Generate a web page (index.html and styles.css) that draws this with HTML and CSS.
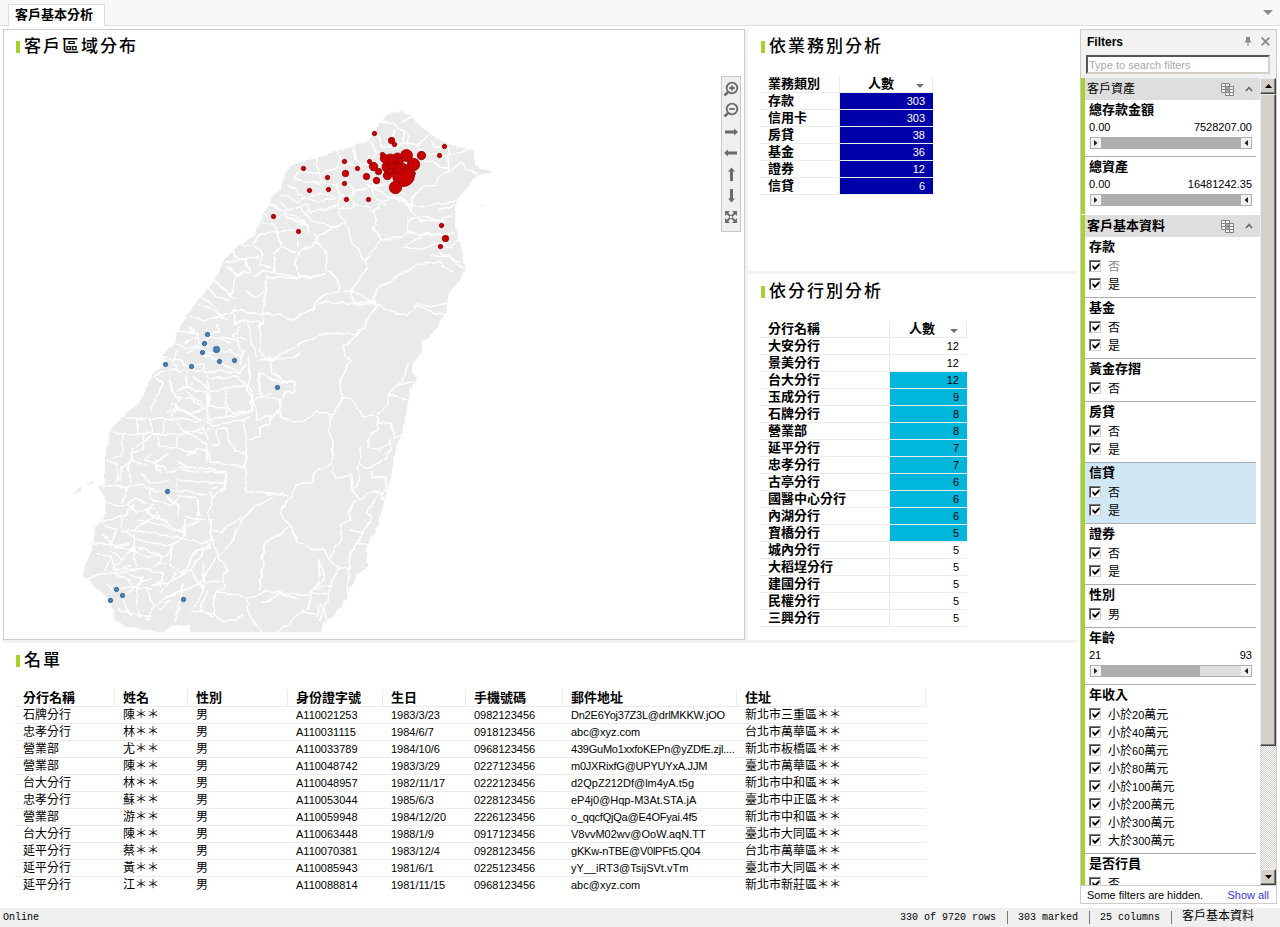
FILE: index.html
```html
<!DOCTYPE html>
<html lang="zh-Hant">
<head>
<meta charset="utf-8">
<title>客戶基本分析</title>
<link rel="stylesheet" href="styles.css">
</head>
<body>
<svg class="defs" width="0" height="0">
  <defs>
    <symbol id="i-table" viewBox="0 0 14 14"><g fill="#f4f4f4" stroke="#848484"><path d="M.5.5h8v9h-8zM.5 3.500h8M.5 6.500h8M4.500.5v9"/><path d="M4.500 3.500h8v9h-8z"/><path fill="#a8a8a8" d="M4.500 3.500h4v6h-4z"/><path d="M4.500 6.500h8M4.500 9.500h8M8.500 3.500v9" fill="none"/></g></symbol>
    <symbol id="i-chev" viewBox="0 0 8 6"><path d="M1 5l3-3.500L7 5" fill="none" stroke="#6a6a6a" stroke-width="1.700"/></symbol>
    <symbol id="i-down" viewBox="0 0 8 4"><path d="M0 0h8L4 4z" fill="#707070"/></symbol>
    <symbol id="i-check" viewBox="0 0 8 8"><path d="M.5 2.800L3 5.300 7.500.8v2.700L3 8 .5 5.500z" fill="#000"/></symbol>
    <symbol id="i-play" viewBox="0 0 4 6"><path d="M0 0l3.500 3L0 6z" fill="#222"/></symbol>
  </defs>
</svg>
<div class="app">
  <header class="tabs">
    <div class="tab">客戶基本分析</div>
    <svg class="tabs-menu" width="10" height="5" viewBox="0 0 10 5"><path d="M0 0h10L5 5z" fill="#8a8a8a"/></svg>
  </header>

  <main class="content">
    <div class="board">
      <section class="panel map">
        <h2>客戶區域分布</h2>
        <svg class="taiwan" viewBox="4 64 740 575">
          <defs>
            <filter id="rough" filterUnits="userSpaceOnUse" x="60" y="100" width="450" height="540" color-interpolation-filters="sRGB">
              <feTurbulence type="fractalNoise" baseFrequency=".13" numOctaves="1" seed="4"/>
              <feDisplacementMap in="SourceGraphic" scale="6" xChannelSelector="R" yChannelSelector="G"/>
            </filter>
            <clipPath id="frame"><path d="M60 100h450v532H60z"/></clipPath>
          </defs>
          <g clip-path="url(#frame)">
          <g filter="url(#rough)">
            <path fill="#eaeaea" d="M393 113L403 112 413 117 418 125 430 133 440 140 457 147 475 150 474 162 480 169 493 171 477 176 467 188 457 200 455 218 457 233 463 253 465 270 458 283 449 292 447 304 444 316 435 330 422 342 422 353 413 363 413 372 417 380 410 387 408 403 403 433 397 443 393 467 388 487 383 507 380 523 370 538 366 550 367 567 357 575 348 597 332 618 323 623 321 638H192L188 625 170 627 163 633 135 628 115 622 112 603 103 593 82 576 92 550 95 530 105 512 106 500 99 486 105 482V457L112 427 122 417 140 403 153 373 167 363 160 357 175 343 177 330 185 318 200 297 212 285 223 262 238 245 253 237 262 218 267 207 280 187 290 167 300 162 320 157 337 150 357 145 370 140 377 128 387 115z"/>
            <path d="M75 493l8-5M86 486l8-5" stroke="#eaeaea" stroke-width="2"/>
            <path d="M481 206h3" stroke="#eaeaea"/>
            <g fill="none" stroke="#fff" stroke-width="4.600" stroke-linejoin="round">
              <g transform="translate(200 90) scale(.33333)">
                <path d="M540 100l15-5 20 5 20 10 12 15 3 30M610 95l25-18M605 120l25 20-10 15 15 30M560 160l25-40M530 130l15 40 35 5 40-20 35 10 35-35"/>
                <path d="M620 155l30 10 15 20 35 10 40 5 5 45-25 10-15 30-45 10-20 25-5 40-20-25-60-20-30-20-20-30 5-40M690 150l15 20 40 5 5 20M740 200l50-15 20-10M750 245l30-30 15 5 5 20 30 15M670 210l30 5 15 15 30 5"/>
                <path d="M350 200l5 50-60-5-15 20M410 180l10 25-10 30M460 168l5 40 20 15M510 155l20 35-15 20M360 250l50-15 35-15 25 10 30-5 10-30M355 250l10 30 40 5 30-10 30 20-20 30-5 30M280 265l40 10 40 5M260 285l30 10 5 20 60 20 50-10M240 310l50 25 70-25 50 10 20-5M235 330l30 30 60-15 5 20 30-5 50-15M410 285l10 45-5 30M450 320l30-20 40-10 40-10 30 20 20 15M450 320l15 30M415 360l40-10 20-5 30 5 15 20M500 280l20 20 10 30 30 15M200 340l50 20 40 25 40 25M190 360l10 25M230 385l20-15 30 25M185 400l30 5 20 20 40-5 20 5M260 385l60 20 10 25M320 365l10 25 40 10 40 20M300 350l20 30"/>
                <path d="M520 370l20-30 40-20 35 10 10 15 50 5 35-10 50-5 30-15M620 330l10 30 35 35 60-5 30-15M715 360l50-15M520 370l10 20-10 20 20 40 70-10 15-20M625 380v45l40 5 60 5 35-10M630 390l40-10 60 15M610 470l60-35 90-5M610 470l50 10 50-20 40 10 30-20"/>
                <path d="M410 365l25 30 10 20 5 35 25 30 15 28 15-5 25-35 10-20M435 400l-40 15-35 20-10 25 25 20 5 40-3 20 30 20 10 25-5 20-35 10-30 20-15 30M490 505l10 30-45 65 5 35 65 5M415 607l40-5 65 35 10-40 80-50 40-20 65-15 20 20 20 10M650 640l40 10 50-10M690 495l60 10 30 10M710 480l40 25 40 30"/>
                <path d="M300 480l45-20 20 5M300 480l-15 50 15 30 75-5M345 430l10 30M290 430l5 40M220 490l25-20 40 20M225 500v50l70 10M160 460l20-30 50-5 15 40M120 465l50 5 20 25-15 30 40 10M100 485l20 25 60-15M75 520l60-15 15 40-50 5-20-20M200 560l95 5 80-10M200 560l-5 90M135 545l-30 20-15 60M135 600l30 20 30-15M160 560l30-20 30 5M40 570l25 20 40 40M20 590l30 30 40 10M0 620l30 20M110 560l-20-30"/>
              </g>
              <g transform="translate(60 300) scale(.33333)">
                <path d="M410 10l30 10 45 30 35-20 45 5 45 15M440 0l30 30M390 50l50 10 30-10 35 10M520 40l5 30 35-10 45 10M470 70l10 20-40 20M540 80l-20 30 40 10M565 70l5 50 20 50M600 70v80l20 30 70-5 30-15M610 0v65l-10 20M440 85v60M350 90l60 10 10 30 35-20 60 20M345 130l30 15 35-5 40 20 60-10 30 20 15-20M480 110l50 10 15 40-5 35M385 80l30 30-40 20M380 160l40-20 20 30M300 170l60 10 20 20 50-5M350 150l-10 40 20 25M430 190l5 30 40-10 60 10 20-30M435 160l50 30 50 25"/>
                <path d="M280 225l60-15 100 5 5 20 90-5 30 35M330 220v50l30 30-30 60M280 230l30 20-40 80M380 215v50l-35 5M380 260l60 20M345 290l50 5 40 30M400 230l40 30v60l-40 20M330 310l60 30 50-20M360 270l40-20M345 320l80 40M380 280l50 30M320 340l40-20M440 240l10 35 50-10 60-10M445 280v40l60 5M500 270l-5 40 20 30 60-5v-60l-15-20-60 10M505 320l-5 30 65-10M440 320l5 40 60-10M565 170l5 60-10 40 25 40-20 30M580 310l10-20 40-10M590 310v50l45-15 30-20-5-30M600 220l20 10 60 20M600 220v70l50 5 10 10"/>
                <path d="M185 350l50 10 100-5 100 10 25 10 60-10 45-15M230 360l5 50M270 360l10 45 30-5 5-45M160 400l50 5 50-5 80 5 40-10 40 5 30-15M190 405l-5 60-30 10M210 460l40-10v-50M215 450l30-20 30-20M275 460l-20 20 30 10 40-30M290 410l10 30 50 5v-35M350 445l70 20M350 370l30 30 60 30v60M400 400l30-20 15 40M380 470l30-20 30-5 10 40 60 10 50 5M500 380l-30 10 5 40-20 10M500 380l5 40 25 30 25 10 5 40M550 360l10 60-5 20M570 420l30-10v-30l30-5v-30l35-10M560 440l-5 60 5 75 70 8 40-5"/>
                <path d="M140 480l30 10 5 50-10 10M180 540l5-35 30-25 45 20M215 460l-10 40 10 50M245 520l30 30 50-10M275 490l30 10 20 20 50-20-20-20M310 470l-30 20 30 30M370 510l130 10-5 50-45-10M370 500l60 5 65 10M360 540l80 5 60 5M355 570l90 15M350 560l5-25M120 555l60 5 65-5 40 20 70-5M200 560l-15 50M270 560l5 40 60 15 20-20M135 610l60 5 30-20 40 15M320 590l35 30v35M350 590l60 5 10 55M280 610l-20 30 40 15M200 610l25 25 60-10M450 570l10 20-15 50 10 50M500 520l-10 50-30 20"/>
                <path d="M140 635l-20 30 80-20 20-30M120 670l50 20-20 50M180 650l10 50 50-20 40-30M225 660l60 10 80 25M290 640l30 30 50 25M220 690l60 10 90 15 5-35 60-25M200 700l50 25 80 10 40-20M375 660l-5 60 70 10 10-10 5-60M370 650l50 10M450 690l35 5 60-45M415 600v50M130 700l30 40 50-10M100 730l50 5 60 15 50 20 60-5 20-30M105 760l50 10 10 30M150 750l40 30 30-40M190 770l-30 40 50-10M225 700l-5 70 10 30M230 740l80 30-20 30M335 740l-5 60 40 20 30-60 50-20M80 845l30-25 80-5 60 25 30-5M190 810l60-5 60 15-10 40M250 830l-20 30M280 800l40-10M150 780l-15 30"/>
                <path d="M450 730l-60 80-55 35-60 10M470 770l-50 80-90 40M450 695l10 40 15 35 35-40 30-60 40-50 60-28M475 770l30 40-15 20 5 30-25 15M350 820l-50 60M370 850l-10 60-20 60M430 790v80l-25 50M160 820l50 20 5 30-30 20 30 60M140 850l20 20 60-10 60 5M230 865v60l15 30M260 870l20 50-20 40M280 920l60-40 30-10M330 900l-30 30M170 930l40 10 60 10M465 880l10-5 60 10 30 10M465 880l-5 60 30 25 60-20M560 895l5 50 40 50M445 870l-25 60 40 20M390 930l70 10M430 850l50-10M390 810l40 60"/>
                <path d="M565 893l60-20 30 3 65 25M600 870l10-90 5-50 60-40"/>
              </g>
              <g transform="translate(260 300) scale(.33333)">
                <path d="M0 40l60 5 35 15 80-45 30-15M205 5l60 5 60 5 25-5M345 0l5 20-40 60-20 25-55-5-50 5-60 25-45 25-40 20-40 5M350 15l40 20 50 12 30-30 80 30M290 105l-40 35v20l25 20-25 40-10 35 5 40-30 60M245 290l30 10 30 45 45 5 5 15M350 345l35-30v-35l40-35 20-55M400 265l35-15 25-5M385 280l55 20M350 365l45 5 5 40 25-5M350 370l5 20-25 10-5 40 35 10 35-25M305 445l-10 50 35 10 50-35 10-20v-35"/>
                <path d="M215 350l-10 40 15 35-5 65 15 45 45-10 5 50 20 25 40-30 20 10 15 25M215 490l-55 30v25l-50 10-15 30-15 20M290 500l10 25-15 40M335 510l5 20h35l5 35-15 20M350 570v20l-30 45 15 20-25 45-40-10M290 600l-25 40 5 20-30 15 5 40-40 65M310 700l-40 60v50M290 730l35 5M80 600l-20 45 35 35-40 20-40 30-10 50M95 685l20 40 40 20 40 5 10 30 35 25 30-5M180 785l15 50-30 30 45-5 25-55M180 780l-5 70-25 30-5 50M210 860l-5 20-55 2M210 880l-20 50 10 30M0 905l30-5 20-20 95 2M125 935l50 10-5-25 15-10v40l-10 15M125 935l-20 20-55 40M265 805v80M60 350l45 15 35-5 30-25 45 10M30 170l5 50M40 220l30 20 40 10-10 30-25-5-10 25v50M0 575l40 5 40 10"/>
              </g>
            </g>
          </g>
          </g>
          <g fill="#c80000" stroke="#900000" stroke-width=".8">
            <g>
              <circle cx="374.500" cy="133.500" r="2.200"/><circle cx="444.500" cy="146.500" r="2.200"/><circle cx="439.500" cy="155.500" r="2.200"/><circle cx="394.500" cy="144.500" r="2.200"/><circle cx="391.500" cy="140.500" r="3.200"/>
              <circle cx="303.500" cy="168.500" r="2.200"/><circle cx="344.500" cy="161.500" r="2.200"/><circle cx="327.500" cy="177.500" r="2.200"/><circle cx="309.500" cy="190.500" r="2.200"/><circle cx="328.500" cy="189.500" r="2.200"/><circle cx="344.500" cy="183.500" r="2.200"/><circle cx="345.500" cy="173.500" r="3.200"/><circle cx="357.500" cy="168.500" r="2.200"/><circle cx="346.500" cy="199.500" r="2.200"/><circle cx="368.500" cy="199.500" r="2.200"/>
              <circle cx="273.500" cy="216.500" r="2.200"/><circle cx="298.500" cy="231.500" r="2.200"/><circle cx="441.500" cy="225.500" r="2.200"/><circle cx="445.500" cy="238.500" r="3.200"/><circle cx="440.500" cy="246.500" r="2.200"/>
              <circle cx="366.500" cy="176.500" r="3.200"/><circle cx="376.500" cy="180.500" r="3.200"/><circle cx="369.500" cy="161.500" r="2.200"/><circle cx="421.500" cy="155.500" r="4.200"/>
            </g>
            <circle cx="403.500" cy="175.500" r="11"/><circle cx="395.500" cy="187.500" r="6.200"/><circle cx="387.500" cy="175.500" r="4.200"/><circle cx="387.500" cy="167" r="5.500"/><circle cx="397.500" cy="158" r="5"/><circle cx="390.500" cy="160" r="6"/><circle cx="382.500" cy="154.500" r="2.200"/><circle cx="384.500" cy="158.500" r="4.200"/><circle cx="397.500" cy="167.500" r="5.500"/><circle cx="392.500" cy="166.500" r="4"/><circle cx="400.500" cy="160.500" r="3.200"/><circle cx="406.500" cy="155.500" r="6"/><circle cx="413.500" cy="164.500" r="6.200"/><circle cx="403.500" cy="166.500" r="3"/><circle cx="413.500" cy="173.500" r="2"/><circle cx="390.500" cy="171.500" r="3.200"/><circle cx="373.500" cy="166.500" r="4.200"/><circle cx="378.500" cy="171.500" r="3.200"/>
          </g>
          <g fill="#4380b8" stroke="#2c608f" stroke-width=".8">
            <circle cx="207.500" cy="334.500" r="2.200"/><circle cx="204.500" cy="343.500" r="2.200"/><circle cx="202.500" cy="352.500" r="2.200"/><circle cx="216.500" cy="349.500" r="3.200"/><circle cx="219.500" cy="361.500" r="2.200"/><circle cx="234.500" cy="360.500" r="2.200"/><circle cx="191.500" cy="366.500" r="2.200"/><circle cx="165.500" cy="364.500" r="2.200"/><circle cx="277.500" cy="387.500" r="2.200"/><circle cx="167.500" cy="491.500" r="2.200"/><circle cx="116.500" cy="589.500" r="2.200"/><circle cx="122.500" cy="595.500" r="2.200"/><circle cx="110.500" cy="600.500" r="2.200"/><circle cx="183.500" cy="599.500" r="2.200"/>
          </g>
        </svg>
        <div class="map-tools">
          <svg viewBox="0 0 16 16"><g fill="none" stroke="#6b6b6b" stroke-width="1.800"><circle cx="9" cy="7" r="5.300"/><path d="M5.200 10.800L1.500 14.500" stroke-width="2.600"/><path d="M6.200 7h5.600M9 4.200v5.600"/></g></svg>
          <svg viewBox="0 0 16 16"><g fill="none" stroke="#6b6b6b" stroke-width="1.800"><circle cx="9" cy="7" r="5.300"/><path d="M5.200 10.800L1.500 14.500" stroke-width="2.600"/><path d="M6.200 7h5.600"/></g></svg>
          <svg viewBox="0 0 16 16"><path fill="#6b6b6b" d="M2 6.500h9V4.500L15 8l-4 3.500v-2H2z"/></svg>
          <svg viewBox="0 0 16 16"><path fill="#6b6b6b" d="M14 6.500H5v-2L1 8l4 3.500v-2h9z"/></svg>
          <svg viewBox="0 0 16 16"><path fill="#6b6b6b" d="M7 15V5.500H5L8.500 1.500 12 5.500h-2V15z"/></svg>
          <svg viewBox="0 0 16 16"><path fill="#6b6b6b" d="M7 1v9.500H5l3.500 4 3.500-4h-2V1z"/></svg>
          <svg viewBox="0 0 16 16"><path fill="#6b6b6b" d="M2 2h5L2 7zM14 2v5L9 2zM2 14V9l5 5zM14 14H9l5-5z"/><path stroke="#6b6b6b" stroke-width="2" d="M3 3l10 10M13 3L3 13"/><path fill="#efefef" d="M7 7h2v2H7z"/></svg>
        </div>
      </section>

      <section class="panel biz">
        <h2>依業務別分析</h2>
        <table class="cross cross-a">
          <tr><th>業務類別</th><th class="cnt">人數<svg width="8" height="4"><use href="#i-down"/></svg></th></tr>
          <tr class="on"><th>存款</th><td>303</td></tr>
          <tr class="on"><th>信用卡</th><td>303</td></tr>
          <tr class="on"><th>房貸</th><td>38</td></tr>
          <tr class="on"><th>基金</th><td>36</td></tr>
          <tr class="on"><th>證券</th><td>12</td></tr>
          <tr class="on"><th>信貸</th><td>6</td></tr>
        </table>
      </section>

      <section class="panel branch">
        <h2>依分行別分析</h2>
        <table class="cross cross-b">
          <tr><th>分行名稱</th><th class="cnt">人數<svg width="8" height="4"><use href="#i-down"/></svg></th></tr>
          <tr><th>大安分行</th><td>12</td></tr>
          <tr><th>景美分行</th><td>12</td></tr>
          <tr class="on"><th>台大分行</th><td>12</td></tr>
          <tr class="on"><th>玉成分行</th><td>9</td></tr>
          <tr class="on"><th>石牌分行</th><td>8</td></tr>
          <tr class="on"><th>營業部</th><td>8</td></tr>
          <tr class="on"><th>延平分行</th><td>7</td></tr>
          <tr class="on"><th>忠孝分行</th><td>7</td></tr>
          <tr class="on"><th>古亭分行</th><td>6</td></tr>
          <tr class="on"><th>國醫中心分行</th><td>6</td></tr>
          <tr class="on"><th>內湖分行</th><td>6</td></tr>
          <tr class="on"><th>寶橋分行</th><td>5</td></tr>
          <tr><th>城內分行</th><td>5</td></tr>
          <tr><th>大稻埕分行</th><td>5</td></tr>
          <tr><th>建國分行</th><td>5</td></tr>
          <tr><th>民權分行</th><td>5</td></tr>
          <tr><th>三興分行</th><td>5</td></tr>
        </table>
      </section>

      <section class="panel list">
        <h2>名單</h2>
        <table class="people">
          <colgroup><col class="w1"><col class="w2"><col class="w3"><col class="w4"><col class="w5"><col class="w6"><col class="w7"><col class="w8"></colgroup>
          <tr><th>分行名稱</th><th>姓名</th><th>性別</th><th>身份證字號</th><th>生日</th><th>手機號碼</th><th>郵件地址</th><th>住址</th></tr>
          <tr><td>石牌分行</td><td>陳＊＊</td><td>男</td><td class="n">A110021253</td><td class="n">1983/3/23</td><td class="n">0982123456</td><td class="n tight">Dn2E6Yoj37Z3L@drlMKKW.jOO</td><td>新北市三重區＊＊</td></tr>
          <tr><td>忠孝分行</td><td>林＊＊</td><td>男</td><td class="n">A110031115</td><td class="n">1984/6/7</td><td class="n">0918123456</td><td class="n">abc@xyz.com</td><td>台北市萬華區＊＊</td></tr>
          <tr><td>營業部</td><td>尤＊＊</td><td>男</td><td class="n">A110033789</td><td class="n">1984/10/6</td><td class="n">0968123456</td><td class="n tight">439GuMo1xxfoKEPn@yZDfE.zjl....</td><td>新北市板橋區＊＊</td></tr>
          <tr><td>營業部</td><td>陳＊＊</td><td>男</td><td class="n">A110048742</td><td class="n">1983/3/29</td><td class="n">0227123456</td><td class="n tight">m0JXRixfG@UPYUYxA.JJM</td><td>臺北市萬華區＊＊</td></tr>
          <tr><td>台大分行</td><td>林＊＊</td><td>男</td><td class="n">A110048957</td><td class="n">1982/11/17</td><td class="n">0222123456</td><td class="n">d2QpZ212Df@lm4yA.t5g</td><td>新北市中和區＊＊</td></tr>
          <tr><td>忠孝分行</td><td>蘇＊＊</td><td>男</td><td class="n">A110053044</td><td class="n">1985/6/3</td><td class="n">0228123456</td><td class="n">eP4j0@Hqp-M3At.STA.jA</td><td>臺北市中正區＊＊</td></tr>
          <tr><td>營業部</td><td>游＊＊</td><td>男</td><td class="n">A110059948</td><td class="n">1984/12/20</td><td class="n">2226123456</td><td class="n tight">o_qqcfQjQa@E4OFyai.4f5</td><td>新北市中和區＊＊</td></tr>
          <tr><td>台大分行</td><td>陳＊＊</td><td>男</td><td class="n">A110063448</td><td class="n">1988/1/9</td><td class="n">0917123456</td><td class="n">V8vvM02wv@OoW.aqN.TT</td><td>臺北市大同區＊＊</td></tr>
          <tr><td>延平分行</td><td>蔡＊＊</td><td>男</td><td class="n">A110070381</td><td class="n">1983/12/4</td><td class="n">0928123456</td><td class="n tight">gKKw-nTBE@V0lPFt5.Q04</td><td>台北市萬華區＊＊</td></tr>
          <tr><td>延平分行</td><td>黃＊＊</td><td>男</td><td class="n">A110085943</td><td class="n">1981/6/1</td><td class="n">0225123456</td><td class="n">yY__iRT3@TsijSVt.vTm</td><td>臺北市大同區＊＊</td></tr>
          <tr><td>延平分行</td><td>江＊＊</td><td>男</td><td class="n">A110088814</td><td class="n">1981/11/15</td><td class="n">0968123456</td><td class="n">abc@xyz.com</td><td>新北市新莊區＊＊</td></tr>
        </table>
      </section>
    </div>

    <aside class="filters">
      <div class="f-head"><b>Filters</b>
        <svg width="7" height="9" viewBox="0 0 7 9"><path d="M2 0h4v4h1v1.500H4.500V9h-1V5.500H1V4h1z" fill="#8a8a8a"/></svg>
        <svg width="9" height="9" viewBox="0 0 9 9"><path d="M.7.7l7.600 7.600M8.300.7L.7 8.300" stroke="#8a8a8a" stroke-width="1.800"/></svg>
      </div>
      <div class="search">Type to search filters</div>
      <div class="f-body">
        <div class="f-list">
          <div class="group">
            <div class="g-head light">客戶資產<svg width="14" height="14"><use href="#i-table"/></svg><svg width="8" height="6"><use href="#i-chev"/></svg></div>
            <div class="item range"><h3>總存款金額</h3><p><span>0.00</span><span>7528207.00</span></p>
              <div class="slider"><i><svg width="4" height="6"><use href="#i-play"/></svg></i><b></b><i class="r"><svg width="4" height="6"><use href="#i-play"/></svg></i></div></div>
            <div class="item range last"><h3>總資產</h3><p><span>0.00</span><span>16481242.35</span></p>
              <div class="slider"><i><svg width="4" height="6"><use href="#i-play"/></svg></i><b></b><i class="r"><svg width="4" height="6"><use href="#i-play"/></svg></i></div></div>
          </div>
          <div class="group">
            <div class="g-head">客戶基本資料<svg width="14" height="14"><use href="#i-table"/></svg><svg width="8" height="6"><use href="#i-chev"/></svg></div>
            <div class="item"><h3>存款</h3><label class="dim"><i><svg><use href="#i-check"/></svg></i>否</label><label><i><svg><use href="#i-check"/></svg></i>是</label></div>
            <div class="item"><h3>基金</h3><label><i><svg><use href="#i-check"/></svg></i>否</label><label><i><svg><use href="#i-check"/></svg></i>是</label></div>
            <div class="item"><h3>黃金存摺</h3><label><i><svg><use href="#i-check"/></svg></i>否</label></div>
            <div class="item"><h3>房貸</h3><label><i><svg><use href="#i-check"/></svg></i>否</label><label><i><svg><use href="#i-check"/></svg></i>是</label></div>
            <div class="item hot"><h3>信貸</h3><label><i><svg><use href="#i-check"/></svg></i>否</label><label><i><svg><use href="#i-check"/></svg></i>是</label></div>
            <div class="item"><h3>證券</h3><label><i><svg><use href="#i-check"/></svg></i>否</label><label><i><svg><use href="#i-check"/></svg></i>是</label></div>
            <div class="item"><h3>性別</h3><label><i><svg><use href="#i-check"/></svg></i>男</label></div>
            <div class="item range"><h3>年齡</h3><p><span>21</span><span>93</span></p>
              <div class="slider part"><i><svg width="4" height="6"><use href="#i-play"/></svg></i><b></b><i class="r"><svg width="4" height="6"><use href="#i-play"/></svg></i></div></div>
            <div class="item"><h3>年收入</h3>
              <label><i><svg><use href="#i-check"/></svg></i>小於<span>20</span>萬元</label>
              <label><i><svg><use href="#i-check"/></svg></i>小於<span>40</span>萬元</label>
              <label><i><svg><use href="#i-check"/></svg></i>小於<span>60</span>萬元</label>
              <label><i><svg><use href="#i-check"/></svg></i>小於<span>80</span>萬元</label>
              <label><i><svg><use href="#i-check"/></svg></i>小於<span>100</span>萬元</label>
              <label><i><svg><use href="#i-check"/></svg></i>小於<span>200</span>萬元</label>
              <label><i><svg><use href="#i-check"/></svg></i>小於<span>300</span>萬元</label>
              <label><i><svg><use href="#i-check"/></svg></i>大於<span>300</span>萬元</label></div>
            <div class="item"><h3>是否行員</h3><label><i><svg><use href="#i-check"/></svg></i>否</label></div>
          </div>
        </div>
        <div class="scroll">
          <div class="btn"><svg width="7" height="4" viewBox="0 0 7 4"><path d="M0 4h7L3.500 0z"/></svg></div>
          <div class="thumb"></div>
          <div class="track"></div>
          <div class="btn"><svg width="7" height="4" viewBox="0 0 7 4"><path d="M0 0h7L3.500 4z"/></svg></div>
        </div>
      </div>
      <div class="f-foot"><span>Some filters are hidden.</span><a>Show all</a></div>
    </aside>
  </main>

  <footer class="status"><span class="online">Online</span><span>330 of 9720 rows</span><span>303 marked</span><span>25 columns</span><span class="tbl">客戶基本資料</span></footer>
</div>
</body>
</html>
```
FILE: styles.css
```css
* { box-sizing: border-box; }
body { margin: 0; background: #fff; color: #000; font: 12px/16px "Liberation Sans", "Noto Sans CJK TC", sans-serif; }
h2, h3, p { margin: 0; }
.defs { display: block; height: 0; }
.app { width: 1280px; height: 927px; display: flex; flex-direction: column; overflow: hidden; }

.tabs { height: 26px; flex: none; background: #f7f7f7; border-bottom: 1px solid #ddd; display: flex; align-items: flex-start; justify-content: space-between; padding: 4px 7px 0 8px; }
.tab { width: 97px; height: 22px; background: #fff; border: 1px solid #ddd; border-bottom: 0; padding-left: 6px; font-size: 13px; font-weight: 700; line-height: 20px; }
.tabs-menu { margin-top: 6px; }

.content { flex: 1; min-height: 0; display: flex; padding: 3px 3px 0; }
.board { width: 1074px; margin-right: 3px; display: grid; grid-template-columns: 742px 332px; grid-template-rows: 242px 369px 1fr; }
.panel { position: relative; min-width: 0; }
.panel h2 { font-size: 17px; font-weight: 500; letter-spacing: 2px; line-height: 34px; height: 34px; display: flex; align-items: center; gap: 4px; padding-left: 12px; }
.panel h2::before { content: ""; width: 4px; height: 12px; background: #a4d32c; }
.map { grid-row: 1 / 3; border: 1px solid #ccc; }
.taiwan { display: block; width: 740px; height: 575px; }
.map-tools { position: absolute; left: 717px; top: 46px; width: 20px; height: 156px; background: #efefef; border: 1px solid #c8c8c8; padding: 2px 1px 4px; display: flex; flex-direction: column; justify-content: space-between; }
.map-tools svg { width: 16px; height: 20px; }
.biz, .branch { border-left: 3px solid #f2f2f2; }
.branch { border-top: 3px solid #f2f2f2; }
.list { grid-column: 1 / 3; border-top: 3px solid #f2f2f2; }
.biz h2, .branch h2, .list h2 { padding-top: 2px; padding-left: 13px; }

table { border-collapse: separate; border-spacing: 0; table-layout: fixed; }
th, td { height: 17px; padding: 0; line-height: 16px; border-bottom: 1px solid #ececec; text-align: left; white-space: nowrap; overflow: hidden; vertical-align: top; }
th { font-size: 13px; font-weight: 700; line-height: 15px; }

.cross { margin: 13px 0 0 12px; }
.cross th:first-child { padding-left: 8px; border-right: 1px solid #ececec; }
.cross-a { width: 173px; }
.cross-a th:first-child { width: 80px; }
.cross-b { width: 207px; }
.cross-b th:first-child { width: 130px; }
.cross .cnt { border-right: 1px solid #ececec; text-align: right; padding-right: 8px; }
.cnt svg { margin-left: 22px; vertical-align: 0; }
.cross-b .cnt svg { margin-left: 15px; }
.cross td { font-size: 11px; text-align: right; padding-right: 8px; }
.cross-a .on td { background: #0000a8; color: #fff; }
.cross-b .on td { background: #00b6da; }

.people { width: 911px; margin: 13px 0 0 12px; }
.people th { border-right: 1px solid #ececec; }
.people th, .people td { padding-left: 8px; }
.people .n { font-size: 11px; }
.people .tight { letter-spacing: -.22px; }
.people tr:last-child td { border-bottom: 0; }
.w1 { width: 100px; } .w2 { width: 73px; } .w3 { width: 100px; } .w4 { width: 95px; }
.w5 { width: 83px; } .w6 { width: 97px; } .w7 { width: 174px; } .w8 { width: 189px; }

.filters { width: 197px; height: 875px; border: 1px solid #ccc; background: #f2f2f2; display: flex; flex-direction: column; }
.f-head { height: 25px; flex: none; display: flex; align-items: center; padding: 0 6px 2px 6px; gap: 10px; }
.f-head b { flex: 1; font-size: 12px; }
.search { flex: none; height: 19px; margin: 0 6px 4px 5px; width: 184px; background: #fff; border: 2px solid; border-color: #555 #d4d0c8 #d4d0c8 #555; font-size: 11px; line-height: 16px; color: #aaa; padding-left: 1px; }
.f-body { flex: 1; min-height: 0; display: flex; background: #fff; }
.f-list { width: 179px; overflow: hidden; }
.group { border-left: 4px solid #a4d32c; }
.group + .group { margin-top: 1px; }
.g-head { height: 22px; background: #dedede; display: flex; align-items: center; gap: 10px; padding: 0 7px 1px 2px; font-size: 13px; font-weight: 700; }
.g-head svg:first-of-type { margin: 2px 0 0 auto; }
.g-head.light { font-size: 12px; font-weight: 400; }
.item { margin-right: 4px; padding: 0 4px 4px 4px; border-bottom: 1px solid #aeaeae; }
.item.last { border-color: transparent; }
.item h3 { font-size: 13px; line-height: 19px; height: 20px; }
.item label { display: flex; align-items: center; height: 18px; font-size: 12px; line-height: 18px; padding-top: 1px; }
.item label > span { font-size: 11px; }
.item label i { width: 12px; height: 12px; margin: -1px 7px 0 0; background: #fff; border: 1px solid; border-color: #777 #d4d0c8 #d4d0c8 #777; box-shadow: inset 1px 1px #404040; display: flex; align-items: center; justify-content: center; padding-left: 1px; }
.item label i svg { width: 8px; height: 8px; }
.dim { color: #888; }
.hot { background: #d1e7f6; }
.item.range { height: 57px; }
.range p { display: flex; justify-content: space-between; font-size: 11px; line-height: 14px; height: 17px; }
.slider { height: 12px; margin-left: 1px; display: flex; border: 1px solid #aeaeae; background: #dedede; }
.slider i { width: 10px; background: #f2f2f2; display: flex; align-items: center; justify-content: center; }
.slider i.r { margin-left: auto; transform: scaleX(-1); }
.slider b { flex: 1; background: #aeaeae; }
.slider.part b { flex: none; width: 99px; }
.scroll { width: 16px; display: flex; flex-direction: column; }
.btn, .thumb { background: #d4d0c8; border: 1px solid; border-color: #f0eee8 #404040 #404040 #f0eee8; box-shadow: inset -1px -1px #808080; }
.btn { height: 16px; flex: none; display: flex; align-items: center; justify-content: center; }
.thumb { height: 652px; flex: none; }
.track { flex: 1; background: repeating-conic-gradient(#d4d0c8 0 25%, #fff 0 50%) 0 0 / 2px 2px; }
.f-foot { height: 18px; flex: none; background: #fff; border-top: 1px solid #ccc; display: flex; justify-content: space-between; padding: 0 7px 0 6px; font-size: 11px; line-height: 18px; }
.f-foot a { color: #3a35d8; }

.status { height: 19px; flex: none; background: #efefef; display: flex; padding: 0 26px 0 3px; font: 10px/20px "Liberation Mono", "Noto Sans CJK TC", monospace; }
.status .online { margin-right: auto; }
.status span + span + span { margin-left: 11px; padding-left: 11px; position: relative; }
.status span + span + span::before { content: ""; position: absolute; left: 0; top: 3px; width: 1px; height: 13px; background: #777; }
.status .tbl { font-size: 12px; line-height: 19px; }
```
